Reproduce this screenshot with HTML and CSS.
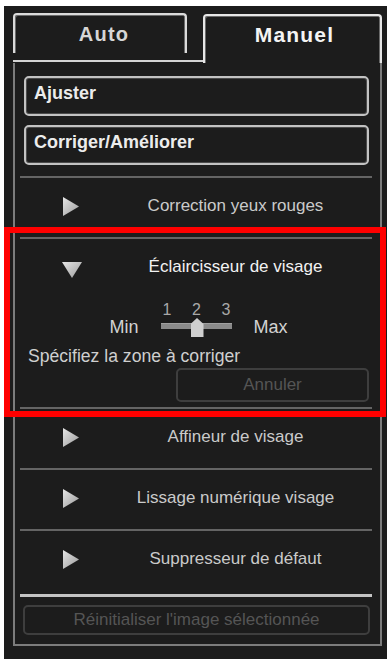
FILE: index.html
```html
<!DOCTYPE html>
<html lang="fr">
<head>
<meta charset="utf-8">
<title>Manuel</title>
<link rel="stylesheet" href="styles.css">
</head>
<body>
<div class="app">
  <div class="tabs">
    <div class="tab-left"><div class="tab tab-auto">Auto</div></div>
    <div class="tab tab-manuel">Manuel</div>
  </div>
  <div class="panel">
    <div class="btn btn-main">Ajuster</div>
    <div class="btn btn-main btn-second">Corriger/Améliorer</div>

    <div class="sep sep-first"></div>
    <div class="row">
      <svg class="arrow arrow-right" viewBox="0 0 16 19"><defs><linearGradient id="g1" x1="0" y1="0" x2="1" y2="1"><stop offset="0" stop-color="#e6e6e6"/><stop offset="1" stop-color="#9a9a9a"/></linearGradient></defs><polygon points="0,0 16,9.5 0,19" fill="url(#g1)"/></svg>
      <span class="row-title">Correction yeux rouges</span>
    </div>

    <div class="sep"></div>
    <div class="row">
      <svg class="arrow arrow-down" viewBox="0 0 20 16"><defs><linearGradient id="g2" x1="0" y1="0" x2="1" y2="1"><stop offset="0" stop-color="#e6e6e6"/><stop offset="1" stop-color="#9a9a9a"/></linearGradient></defs><polygon points="0,0 20,0 10,16" fill="url(#g2)"/></svg>
      <span class="row-title row-title-open">Éclaircisseur de visage</span>
    </div>
    <div class="expand">
      <div class="level">
        <span class="level-label">Min</span>
        <div class="slider">
          <div class="ticks"><span>1</span><span>2</span><span>3</span></div>
          <div class="track"><span class="thumb"></span></div>
        </div>
        <span class="level-label">Max</span>
      </div>
      <div class="hint">Spécifiez la zone à corriger</div>
      <div class="btn btn-disabled btn-cancel">Annuler</div>
    </div>

    <div class="sep"></div>
    <div class="row">
      <svg class="arrow arrow-right" viewBox="0 0 16 19"><defs><linearGradient id="g3" x1="0" y1="0" x2="1" y2="1"><stop offset="0" stop-color="#e6e6e6"/><stop offset="1" stop-color="#9a9a9a"/></linearGradient></defs><polygon points="0,0 16,9.5 0,19" fill="url(#g3)"/></svg>
      <span class="row-title">Affineur de visage</span>
    </div>

    <div class="sep"></div>
    <div class="row">
      <svg class="arrow arrow-right" viewBox="0 0 16 19"><defs><linearGradient id="g4" x1="0" y1="0" x2="1" y2="1"><stop offset="0" stop-color="#e6e6e6"/><stop offset="1" stop-color="#9a9a9a"/></linearGradient></defs><polygon points="0,0 16,9.5 0,19" fill="url(#g4)"/></svg>
      <span class="row-title">Lissage numérique visage</span>
    </div>

    <div class="sep"></div>
    <div class="row">
      <svg class="arrow arrow-right" viewBox="0 0 16 19"><defs><linearGradient id="g5" x1="0" y1="0" x2="1" y2="1"><stop offset="0" stop-color="#e6e6e6"/><stop offset="1" stop-color="#9a9a9a"/></linearGradient></defs><polygon points="0,0 16,9.5 0,19" fill="url(#g5)"/></svg>
      <span class="row-title">Suppresseur de défaut</span>
    </div>

    <div class="sep sep-strong"></div>
    <div class="btn btn-disabled btn-reset">Réinitialiser l'image sélectionnée</div>
  </div>
  <div class="highlight"></div>
</div>
</body>
</html>
```

FILE: styles.css
```css
html, body {
  margin: 0;
  padding: 0;
  background: #ffffff;
}

body {
  font-family: "Liberation Sans", Arial, sans-serif;
}

.app {
  position: relative;
  box-sizing: border-box;
  margin: 6px 0 0 4px;
  width: 383px;
  height: 653px;
  padding-top: 7px;
  background: #1c1c1c;
  overflow: hidden;
}

/* ---------- tabs ---------- */
.tabs {
  display: flex;
  align-items: flex-start;
  padding-left: 9px;
}

.tab-left {
  box-sizing: border-box;
  width: 190px;
  height: 49px;
  border-bottom: 2px solid #d4d4d4;
}

.tab {
  box-sizing: border-box;
  display: flex;
  align-items: center;
  justify-content: center;
  border: 2px solid #dadada;
  border-bottom: none;
  border-radius: 4px 4px 0 0;
  box-shadow: inset 1px 1px 0 #6a6a6a, inset -1px 0 0 #6a6a6a;
  font-weight: bold;
  font-size: 20px;
  letter-spacing: 1.2px;
}

.tab-auto {
  width: 174px;
  height: 40px;
  padding-left: 8px;
  color: #d6d6d6;
}

.tab-manuel {
  width: 179px;
  height: 49px;
  margin-top: 1px;
  padding: 0 0 9px 4px;
  color: #f4f4f4;
  border-color: #e6e6e6;
  font-size: 21px;
}

/* ---------- panel ---------- */
.panel {
  box-sizing: border-box;
  width: 369px;
  margin-left: 9px;
  padding: 13px 0 9px 0;
  border: 2px solid #7c7c7c;
  border-top: none;
  display: flex;
  flex-direction: column;
}

.btn {
  box-sizing: border-box;
  display: flex;
  align-items: center;
  border-radius: 5px;
}

.btn-main {
  height: 40px;
  margin: 0 11px 0 9px;
  padding: 0 0 5px 8px;
  border: 2px solid #c2c2c2;
  box-shadow: inset 0 0 0 1px #4a4a4a;
  color: #ececec;
  font-weight: bold;
  font-size: 18px;
}

.btn-second {
  margin-top: 9px;
}

.btn-disabled {
  justify-content: center;
  border: 2px solid #3e3e3e;
  color: #555555;
  font-size: 17px;
}

.sep {
  height: 2px;
  margin: 0 8px 0 5px;
  background: #646464;
}

.sep-first {
  margin-top: 11px;
}

.sep-strong {
  height: 3px;
  margin-top: 4px;
  background: #c4c4c4;
}

.row {
  display: flex;
  align-items: center;
  height: 59px;
  padding: 0 0 3px 47px;
  box-sizing: border-box;
}

.arrow {
  flex: none;
  display: block;
}

.arrow-right {
  width: 16px;
  height: 19px;
  margin-right: 12px;
  margin-left: 1px;
}

.arrow-down {
  width: 20px;
  height: 16px;
  margin-right: 9px;
  margin-top: 5px;
}

.row-title {
  flex: 1;
  text-align: center;
  font-size: 17px;
  color: #cacaca;
}

.row-title-open {
  color: #f2f2f2;
}

/* ---------- expanded content ---------- */
.expand {
  display: flex;
  flex-direction: column;
  padding-bottom: 5px;
}

.level {
  display: flex;
  justify-content: center;
  align-items: flex-end;
  gap: 22px;
  margin-top: 4px;
  padding-left: 2px;
}

.level-label {
  font-size: 18px;
  line-height: 20px;
  color: #d2d2d2;
}

.slider {
  width: 71px;
  display: flex;
  flex-direction: column;
}

.ticks {
  display: flex;
  justify-content: space-between;
  padding: 0 1px 0 2px;
  height: 15px;
  font-size: 16px;
  line-height: 15px;
  color: #a8a8a8;
}

.track {
  position: relative;
  height: 20px;
}

.track::before {
  content: "";
  position: absolute;
  left: 0;
  right: 0;
  top: 6px;
  height: 6px;
  background: #8a8a8a;
  box-shadow: inset 0 1px 0 #a0a0a0;
}

.thumb {
  position: absolute;
  left: 30px;
  top: 1px;
  width: 13px;
  height: 19px;
  background: #cfcfcf;
  clip-path: polygon(50% 0, 100% 32%, 100% 100%, 0 100%, 0 32%);
}

.hint {
  margin: 9px 0 0 13px;
  font-size: 17.6px;
  line-height: 20px;
  color: #cfcfcf;
}

.btn-cancel {
  align-self: flex-end;
  width: 193px;
  height: 34px;
  margin: 2px 11px 0 0;
}

.btn-reset {
  height: 30px;
  margin: 8px 10px 0 8px;
}

/* ---------- annotation ---------- */
.highlight {
  position: absolute;
  box-sizing: border-box;
  left: 0;
  top: 221px;
  width: 382px;
  height: 190px;
  border: 6px solid #ff0000;
}
```
